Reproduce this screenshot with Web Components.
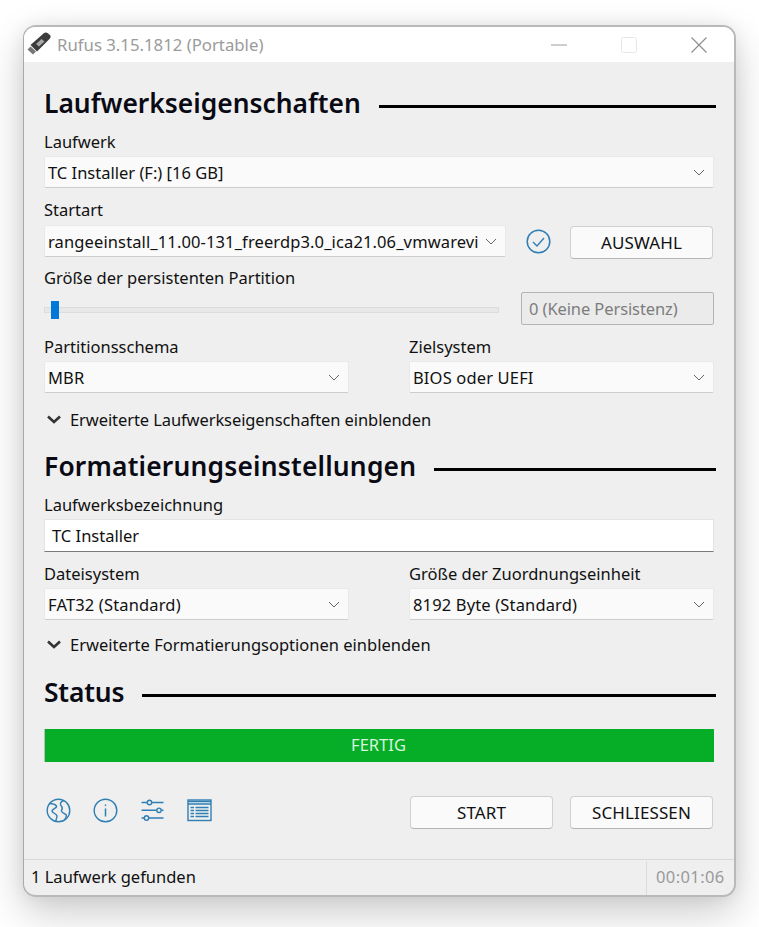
<!DOCTYPE html>
<html lang="de">
<head>
<meta charset="utf-8">
<title>Rufus</title>
<style>
html, body { margin: 0; height: 100%; }
body {
    background: #fff;
    font: 16.5px "Noto Sans", "Liberation Sans", sans-serif;
    color: #111;
    padding: 25px 0 0 23px;
    box-sizing: border-box;
    overflow: hidden;
}
</style>
</head>
<body>
<rufus-window title-text="Rufus 3.15.1812 (Portable)">
    <section-head top="24">Laufwerkseigenschaften</section-head>
    <form-field gap="11"><span slot="label">Laufwerk</span><drop-down style="letter-spacing:0">TC Installer (F:) [16 GB]</drop-down></form-field>
    <form-field gap="10" below="4">
        <span slot="label">Startart</span>
        <boot-row><drop-down style="letter-spacing:.12px">rangeeinstall_11.00-131_freerdp3.0_ica21.06_vmwarevi</drop-down></boot-row>
    </form-field>
    <form-field gap="10">
        <span slot="label">Größe der persistenten Partition</span>
        <persist-row>0 (Keine Persistenz)</persist-row>
    </form-field>
    <two-col>
        <form-field gap="0"><span slot="label">Partitionsschema</span><drop-down>MBR</drop-down></form-field>
        <form-field gap="0"><span slot="label">Zielsystem</span><drop-down>BIOS oder UEFI</drop-down></form-field>
    </two-col>
    <expand-row top="13">Erweiterte Laufwerkseigenschaften einblenden</expand-row>

    <section-head top="18" style="letter-spacing:.19px">Formatierungseinstellungen</section-head>
    <form-field gap="11"><span slot="label">Laufwerksbezeichnung</span><text-box>TC Installer</text-box></form-field>
    <two-col>
        <form-field gap="0"><span slot="label">Dateisystem</span><drop-down>FAT32 (Standard)</drop-down></form-field>
        <form-field gap="0"><span slot="label">Größe der Zuordnungseinheit</span><drop-down>8192 Byte (Standard)</drop-down></form-field>
    </two-col>
    <expand-row top="11" style="letter-spacing:0">Erweiterte Formatierungsoptionen einblenden</expand-row>

    <section-head top="19" style="letter-spacing:-.15px">Status</section-head>
    <progress-bar>FERTIG</progress-bar>
    <tool-bar></tool-bar>
    <status-bar slot="footer" time="00:01:06">1 Laufwerk gefunden</status-bar>
</rufus-window>

<script>
// small helper, every component is just a template string plus a shadow root
function shadow(el, html) {
    el.attachShadow({mode: "open"}).innerHTML = html;
    return el.shadowRoot;
}

class RufusWindow extends HTMLElement {
    constructor() {
        super();
        shadow(this, `
<style>
:host {
    display: flex;
    flex-direction: column;
    width: 713px;
    height: 872px;
    box-sizing: border-box;
    border: 2px solid #b9b9b9;
    border-left: 1px solid #a9a9a9;
    border-radius: 13px;
    background: #efefef;
    overflow: hidden;
    box-shadow: 0 16px 40px rgba(0,0,0,0.2), 0 0 18px rgba(0,0,0,0.07);
}
.title {
    display: flex;
    align-items: center;
    height: 35px;
    flex: none;
    background: #fff;
    color: #9b9b9b;
    padding-left: 2px;
}
.title svg.usb { width: 26px; height: 24px; margin-right: 5px; margin-top: -4px; }
.name { flex: 1; font-size: 16.75px; margin-top: -1px; }
.ctl { width: 70px; height: 35px; display: flex; align-items: center; justify-content: center; }
.content { flex: 1; display: flex; flex-direction: column; padding: 0 20px 0 20px; }
</style>
<div class="title">
    <svg class="usb" viewBox="0 0 26 24">
        <path d="M1.5 18.5 L7 23.5 L10 20.5 L4.5 15.5Z" fill="#777"/>
        <path d="M4.5 14 L17.5 2.5 Q19.5 1 21.5 2 L24.5 4.5 Q25 6.5 23.5 8 L11 20.5 Z" fill="#3c3c3c"/>
        <path d="M10 13 L15.5 8 L18.5 10.5 L13 15.5Z" fill="#a8a8a8"/>
    </svg>
    <span class="name"></span>
    <span class="ctl"><svg width="16" height="2"><rect width="16" height="1" y="0.5" fill="#9c9c9c"/></svg></span>
    <span class="ctl"><svg width="16" height="16"><rect x="0.5" y="0.5" width="15" height="15" rx="2" fill="#fff" stroke="#e6e6e6"/></svg></span>
    <span class="ctl"><svg width="18" height="18"><path d="M1.5 1.5 L16.5 16.5 M16.5 1.5 L1.5 16.5" stroke="#8e8e8e" stroke-width="1.2" fill="none"/></svg></span>
</div>
<div class="content"><slot></slot></div>
<slot name="footer"></slot>`);
    }
    connectedCallback() {
        this.shadowRoot.querySelector(".name").textContent = this.getAttribute("title-text");
    }
}

class SectionHead extends HTMLElement {
    constructor() {
        super();
        shadow(this, `
<style>
:host {
    display: flex;
    align-items: center;
    height: 34px;
    font-size: 26.4px;
    font-weight: 600;
    color: #0a0a14;
    margin-right: -2px;
    white-space: nowrap;
}
.rule { flex: 1; height: 3px; background: #000; margin: 7px 0 0 18px; }
</style>
<slot></slot><div class="rule"></div>`);
    }
    connectedCallback() {
        this.style.marginTop = (this.getAttribute("top") || 23) + "px";
    }
}

class FormField extends HTMLElement {
    constructor() {
        super();
        shadow(this, `
<style>
:host { display: block; min-width: 0; }
.label { height: 22px; line-height: 22px; margin-bottom: 3px; white-space: nowrap; letter-spacing: 0; }
</style>
<div class="label"><slot name="label"></slot></div>
<slot></slot>`);
    }
    connectedCallback() {
        this.style.marginTop = (this.getAttribute("gap") || 0) + "px";
        const below = this.getAttribute("below");
        if (below) this.shadowRoot.querySelector(".label").style.marginBottom = below + "px";
    }
}

class DropDown extends HTMLElement {
    constructor() {
        super();
        shadow(this, `
<style>
:host {
    display: flex;
    align-items: center;
    height: 32px;
    margin-bottom: 1px;
    box-sizing: border-box;
    background: #fafafa;
    border: 1px solid #e9e9e9;
    border-bottom-color: #cdcdcd;
    border-radius: 2px;
    padding: 0 8px 0 3px;
    letter-spacing: .15px;
}
.txt { flex: 1; min-width: 0; overflow: hidden; white-space: nowrap; }
svg { flex: none; margin-left: 6px; }
</style>
<div class="txt"><slot></slot></div>
<svg width="12" height="7"><path d="M1 1 L6 6 L11 1" fill="none" stroke="#666" stroke-width="1"/></svg>`);
    }
}

class BootRow extends HTMLElement {
    constructor() {
        super();
        shadow(this, `
<style>
:host { display: flex; height: 32px; align-items: flex-start; }
::slotted(drop-down) { width: 462px; flex: none; }
svg { flex: none; margin: 4px 19px 0 20px; }
action-button { margin-top: 1px; }
</style>
<slot></slot>
<svg width="25" height="25" viewBox="0 0 25 25"><circle cx="12.5" cy="12.5" r="11.3" fill="none" stroke="#2f7fb5" stroke-width="1.5"/><path d="M7 13 L11 17 L18 9" fill="none" stroke="#2f7fb5" stroke-width="1.4"/></svg>
<action-button>AUSWAHL</action-button>`);
    }
}

class ActionButton extends HTMLElement {
    constructor() {
        super();
        shadow(this, `
<style>
:host {
    display: flex;
    align-items: center;
    justify-content: center;
    flex: none;
    width: 143px;
    height: 33px;
    box-sizing: border-box;
    background: #fafafa;
    border: 1px solid #d0d0d0;
    border-bottom-color: #b5b5b5;
    border-radius: 4px;
    color: #111;
    font-size: 17px;
    letter-spacing: .1px;
}
</style>
<slot></slot>`);
    }
}

class PersistRow extends HTMLElement {
    constructor() {
        super();
        shadow(this, `
<style>
:host { display: flex; height: 33px; align-items: center; }
.slider { flex: none; width: 455px; height: 18px; display: flex; align-items: center; margin-right: 22px; margin-top: 3px; }
.track { flex: 1; height: 6px; box-sizing: border-box; background: #e8e8e8; border: 1px solid #dcdcdc; display: flex; align-items: center; }
.thumb { width: 8px; height: 18px; background: #0078d7; margin-left: 6px; flex: none; }
.val {
    flex: 1;
    height: 33px;
    box-sizing: border-box;
    border: 1px solid #b4b4b4;
    border-radius: 2px;
    background: #ebebeb;
    color: #7d7d7d;
    line-height: 31px;
    padding-left: 7px;
    white-space: nowrap;
    letter-spacing: -.1px;
}
</style>
<div class="slider"><div class="track"><div class="thumb"></div></div></div>
<div class="val"><slot></slot></div>`);
    }
}

class TwoCol extends HTMLElement {
    constructor() {
        super();
        shadow(this, `
<style>
:host { display: grid; grid-template-columns: 305px 305px; column-gap: 60px; margin-top: 11px; }
</style>
<slot></slot>`);
    }
}

class ExpandRow extends HTMLElement {
    constructor() {
        super();
        shadow(this, `
<style>
:host { display: flex; align-items: center; height: 24px; white-space: nowrap; letter-spacing: -.09px; }
svg { flex: none; margin: 0 9px 0 3px; }
</style>
<svg width="14" height="9"><path d="M1 1.5 L7 7 L13 1.5" fill="none" stroke="#333" stroke-width="2.6"/></svg>
<slot></slot>`);
    }
    connectedCallback() {
        this.style.marginTop = (this.getAttribute("top") || 12) + "px";
    }
}

class TextBox extends HTMLElement {
    constructor() {
        super();
        shadow(this, `
<style>
:host {
    display: flex;
    align-items: center;
    height: 33px;
    box-sizing: border-box;
    background: #fff;
    border: 1px solid #e4e4e4;
    border-bottom: 1px solid #7a7a7a;
    padding-left: 7px;
}
</style>
<slot></slot>`);
    }
}

class ProgressBar extends HTMLElement {
    constructor() {
        super();
        shadow(this, `
<style>
:host {
    display: flex;
    align-items: center;
    justify-content: center;
    height: 33px;
    margin-top: 20px;
    padding: 0 2px 3px 0;
    box-sizing: border-box;
    background: #06ae27;
    border: 1px solid #bcbcbc;
    border-width: 0 0 0 1px;
    color: #d9f3de;
}
</style>
<slot></slot>`);
    }
}

class ToolBar extends HTMLElement {
    constructor() {
        super();
        shadow(this, `
<style>
:host { display: flex; align-items: center; height: 33px; margin-top: 34px; }
.icons { flex: 1; display: flex; align-items: center; gap: 22px; margin-left: 2px; margin-top: -5px; }
svg { width: 25px; height: 25px; fill: none; stroke: #2f7fb5; stroke-width: 1.4; flex: none; }
action-button + action-button { margin-left: 17px; }
action-button:last-child { margin-right: 1px; }
</style>
<div class="icons">
    <svg viewBox="0 0 25 25">
        <circle cx="12.5" cy="12.5" r="11.3"/>
        <path d="M3.5 5.5 C6 5.5 9 6 10.5 8 C11.5 10 6.5 10.5 6 13 C6 15 10.5 15.5 11 18 C11 20 9.5 21.5 10 23.5"/>
        <path d="M18 2.5 C15 3.5 13.5 5.5 15 7.5 C17 9.5 16.5 11 15.5 12.5 C15 14.5 18 15 20 16.5 C21 18 19.5 20.5 18 22.5"/>
    </svg>
    <svg viewBox="0 0 25 25">
        <circle cx="12.5" cy="12.5" r="11.3"/>
        <path d="M12.5 10.5 V18.5" stroke-width="1.5"/>
        <circle cx="12.5" cy="7.2" r="0.5" stroke-width="1"/>
    </svg>
    <svg viewBox="0 0 25 25" stroke-width="1.2">
        <path d="M1.5 4.5 H7.3 M11.7 4.5 H23.5 M1.5 12.3 H16.8 M21.2 12.3 H23.5 M1.5 20 H4.3 M8.7 20 H23.5"/>
        <circle cx="9.5" cy="4.5" r="2.2"/><circle cx="19" cy="12.3" r="2.2"/><circle cx="6.5" cy="20" r="2.2"/>
    </svg>
    <svg viewBox="0 0 25 25">
        <rect x="1" y="2" width="23" height="20.5"/>
        <path d="M1 3.5 H24 M1 6 H24" stroke-width="1.6"/>
        <path d="M3.5 9.5 H7 M8.5 9.5 H21.5 M3.5 12.5 H7 M8.5 12.5 H21.5 M3.5 15.5 H7 M8.5 15.5 H21.5 M3.5 18.5 H7 M8.5 18.5 H21.5" stroke-width="1.5"/>
    </svg>
</div>
<action-button>START</action-button>
<action-button>SCHLIESSEN</action-button>`);
    }
}

class StatusBar extends HTMLElement {
    constructor() {
        super();
        shadow(this, `
<style>
:host {
    display: flex;
    flex: none;
    height: 36px;
    box-sizing: border-box;
    border-top: 1px solid #d9d9d9;
    align-items: center;
    white-space: nowrap;
}
.msg { flex: 1; padding: 0 0 2px 7px; }
.time { width: 88px; height: 34px; box-sizing: border-box; border-left: 1px solid #dcdcdc; color: #9a9a9a; line-height: 32px; padding-left: 9px; letter-spacing: .4px; }
</style>
<div class="msg"><slot></slot></div>
<div class="time"></div>`);
    }
    connectedCallback() {
        this.shadowRoot.querySelector(".time").textContent = this.getAttribute("time");
    }
}

customElements.define("rufus-window", RufusWindow);
customElements.define("section-head", SectionHead);
customElements.define("form-field", FormField);
customElements.define("drop-down", DropDown);
customElements.define("boot-row", BootRow);
customElements.define("action-button", ActionButton);
customElements.define("persist-row", PersistRow);
customElements.define("two-col", TwoCol);
customElements.define("expand-row", ExpandRow);
customElements.define("text-box", TextBox);
customElements.define("progress-bar", ProgressBar);
customElements.define("tool-bar", ToolBar);
customElements.define("status-bar", StatusBar);
</script>
</body>
</html>
